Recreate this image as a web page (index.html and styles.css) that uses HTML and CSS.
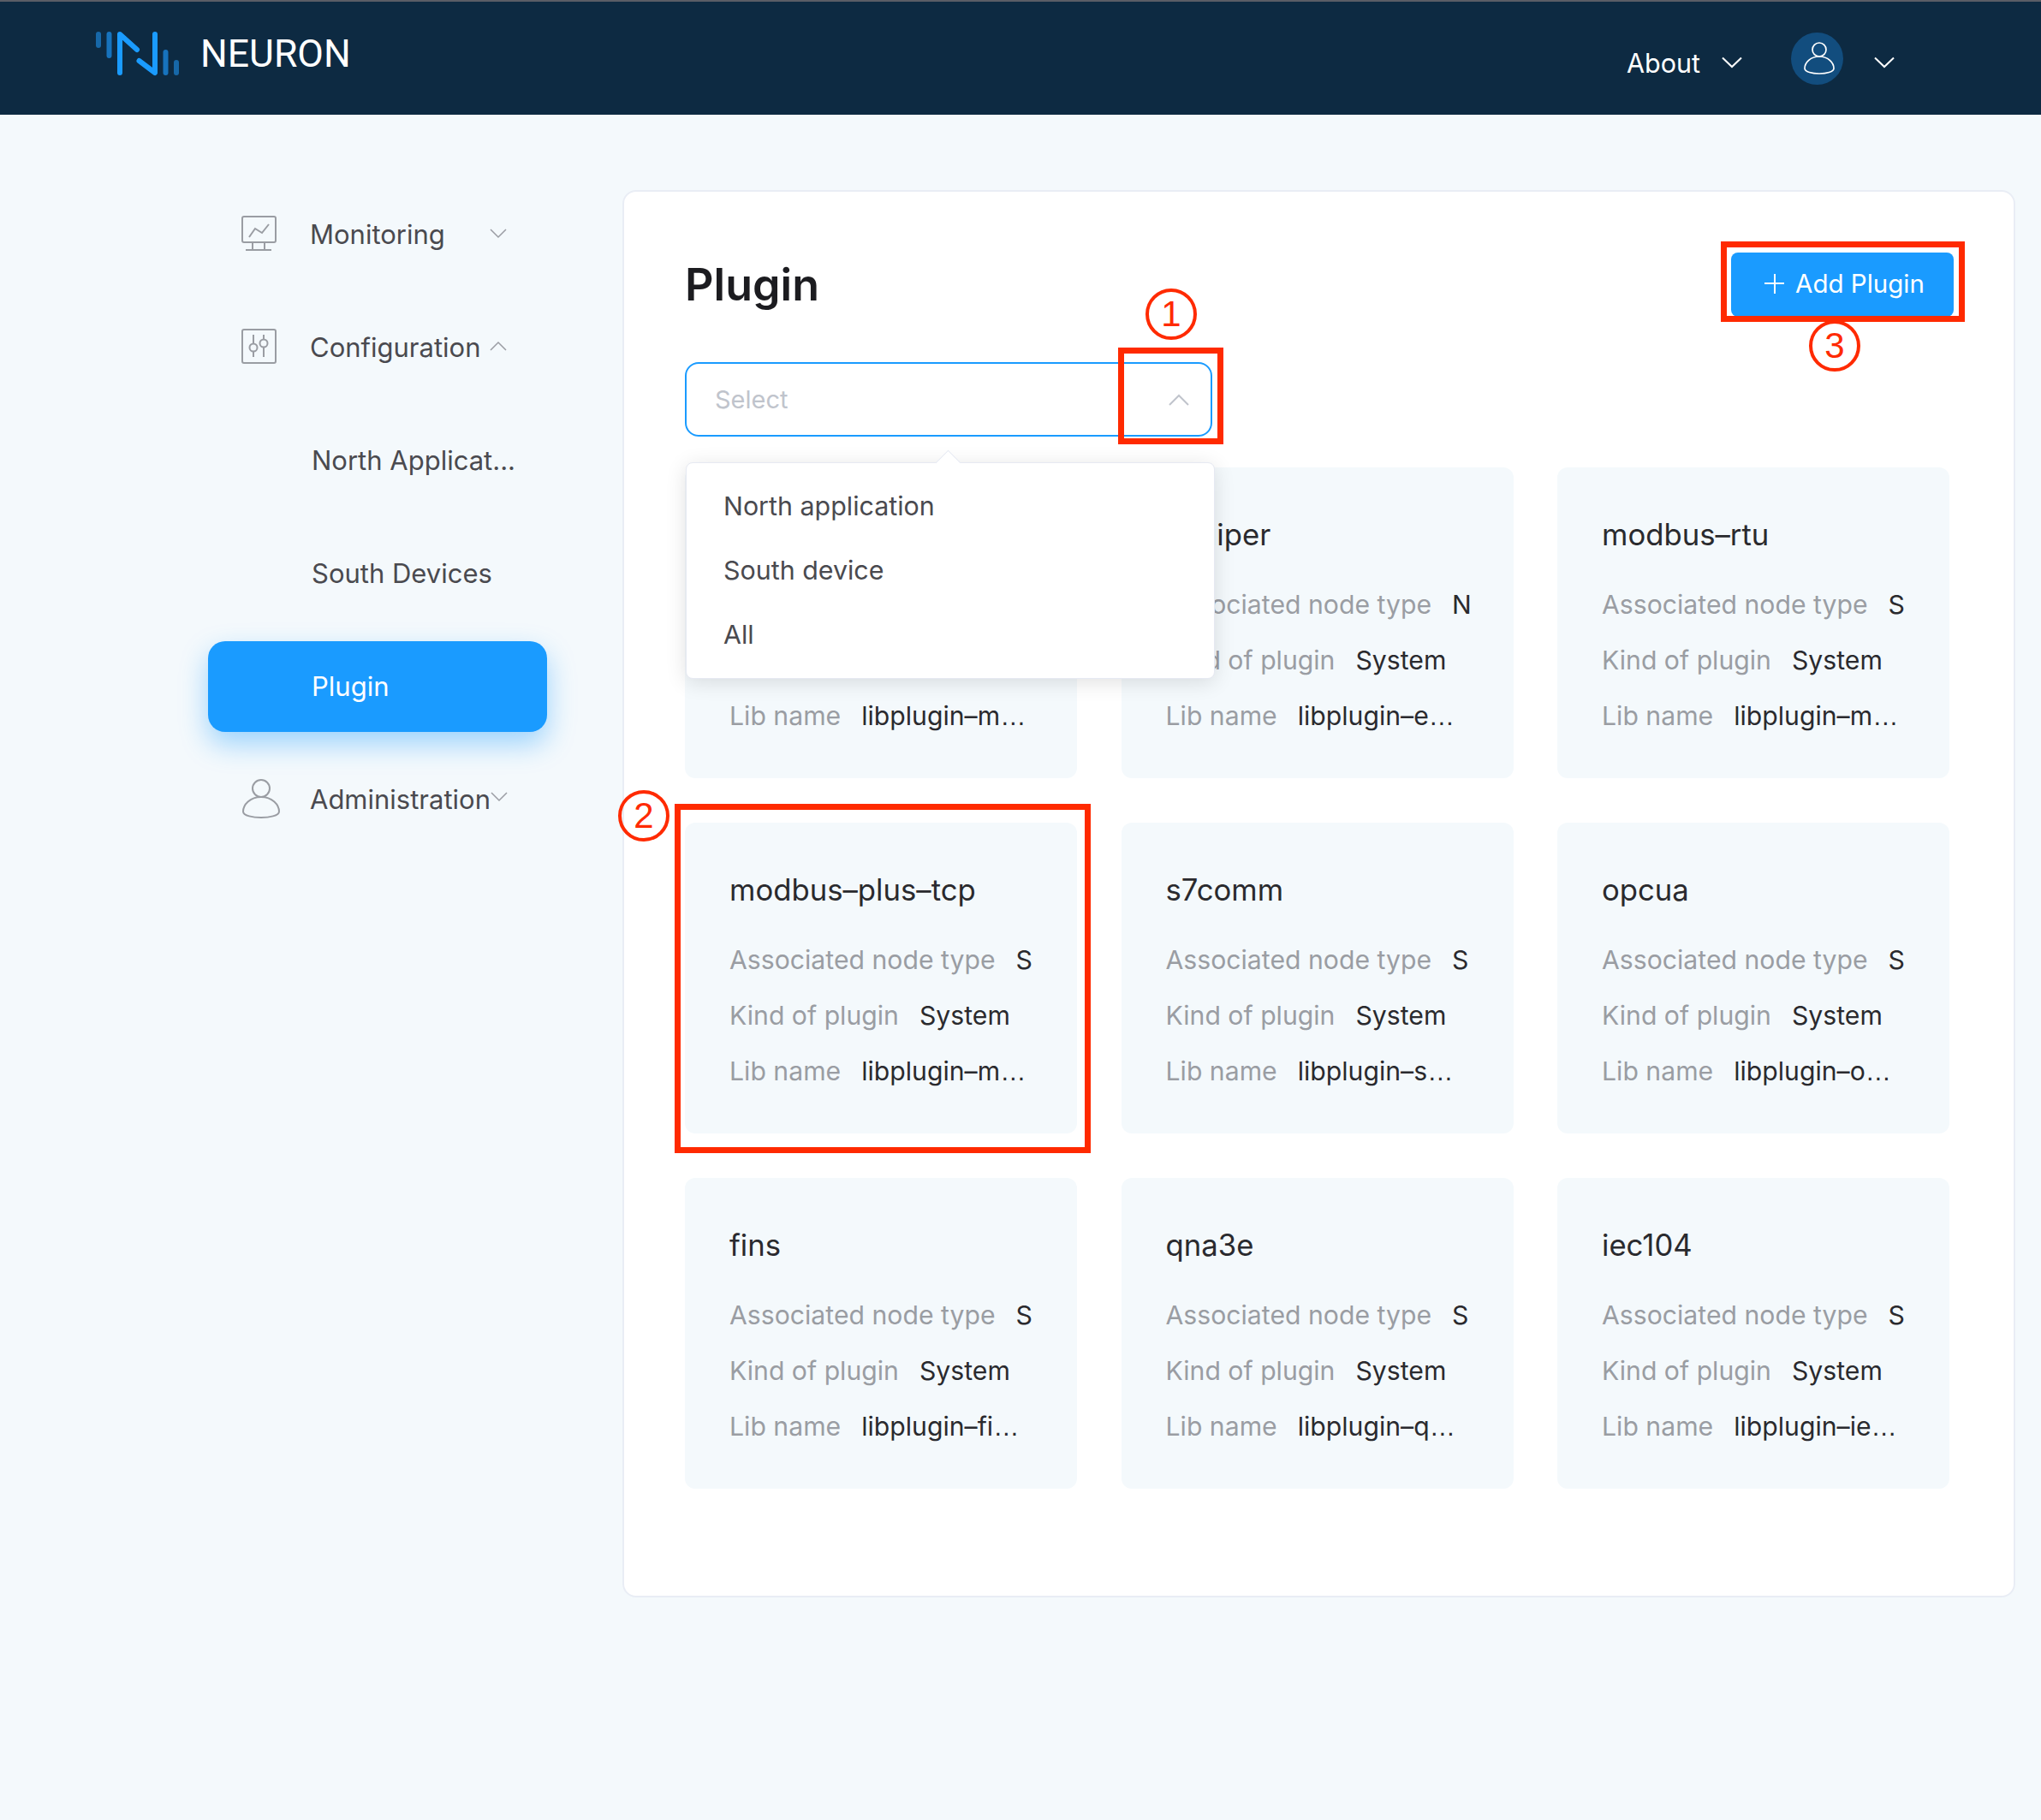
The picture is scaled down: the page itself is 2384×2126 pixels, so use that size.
FILE: index.html
```html
<!DOCTYPE html>
<html lang="en">
<head>
  <meta charset="UTF-8">
  <title>Neuron - Plugin</title>
  <link rel="stylesheet" href="styles.css">
</head>
<body>
  <header class="topbar">
    <div class="brand">
      <svg class="logo" width="100" height="55" viewBox="0 0 100 55" fill="none" stroke-linecap="round" stroke-linejoin="round" stroke-width="6">
        <path d="M5 5V18" stroke="#1768a8"/>
        <path d="M17.500 5V30" stroke="#1773bd"/>
        <path d="M30 50V5L50 23" stroke="#1a9bff"/>
        <path d="M52.500 36L71 50V5" stroke="#1a9bff"/>
        <path d="M83.500 26V50" stroke="#1773bd"/>
        <path d="M96 38V50" stroke="#1768a8"/>
      </svg>
      <span class="brand-name">NEURON</span>
    </div>
    <div class="topbar-right">
      <span class="about">About</span>
      <svg class="chev-top" width="24" height="14" viewBox="0 0 24 14" fill="none" stroke="#fff" stroke-width="2"><path d="M1 1.500L12 12L23 1.500"/></svg>
      <span class="avatar">
        <svg width="38" height="38" viewBox="0 0 38 38" fill="none" stroke="#fff" stroke-width="1.700"><circle cx="19" cy="9" r="8"/><path d="M19 17C9 17 2 24 2 31C2 35 11 37 19 37C27 37 36 35 36 31C36 24 29 17 19 17Z"/></svg>
      </span>
      <svg class="chev-top" width="24" height="14" viewBox="0 0 24 14" fill="none" stroke="#fff" stroke-width="2"><path d="M1 1.500L12 12L23 1.500"/></svg>
    </div>
  </header>

  <div class="layout">
    <nav class="sidebar">
      <div class="nav-item">
        <svg class="nav-icon" width="42" height="42" viewBox="0 0 42 42" fill="none" stroke="#9a9da3" stroke-width="2"><rect x="1" y="1" width="39" height="30" rx="2"/><path d="M9 25L16 15L24 20L32 10"/><path d="M13 31V40M27 31V40M5 40H35"/></svg>
        <span class="nav-label">Monitoring</span>
        <svg class="nav-chev" width="20" height="12" viewBox="0 0 20 12" fill="none" stroke="#9a9da3" stroke-width="1.500"><path d="M1 1L10 10L19 1"/></svg>
      </div>
      <div class="nav-item">
        <svg class="nav-icon" width="42" height="42" viewBox="0 0 42 42" fill="none" stroke="#9a9da3" stroke-width="2"><rect x="1" y="1" width="39" height="39" rx="2"/><path d="M14 7V17.500M14 26.500V33M26 7V12.500M26 21.500V33"/><circle cx="14" cy="22" r="4.500"/><circle cx="26" cy="17" r="4.500"/></svg>
        <span class="nav-label">Configuration</span>
        <svg class="nav-chev up" width="20" height="12" viewBox="0 0 20 12" fill="none" stroke="#9a9da3" stroke-width="1.500"><path d="M1 11L10 2L19 11"/></svg>
      </div>
      <div class="nav-item sub">North Applicat...</div>
      <div class="nav-item sub">South Devices</div>
      <div class="nav-item sub active">Plugin</div>
      <div class="nav-item admin">
        <svg class="nav-icon" width="46" height="46" viewBox="0 0 46 46" fill="none" stroke="#9a9da3" stroke-width="2"><circle cx="23" cy="11" r="10"/><path d="M23 21C10 21 2 30 2 38C2 43 14 45 23 45C32 45 44 43 44 38C44 30 36 21 23 21Z"/></svg>
        <span class="nav-label">Administration</span>
        <svg class="nav-chev" width="20" height="12" viewBox="0 0 20 12" fill="none" stroke="#9a9da3" stroke-width="1.500"><path d="M1 1L10 10L19 1"/></svg>
      </div>
    </nav>

    <main class="panel">
      <div class="panel-head">
        <h1>Plugin</h1>
        <button class="add-btn"><span class="plus"></span>Add Plugin</button>
      </div>
      <div class="select">
        <span>Select</span>
        <svg width="24" height="14" viewBox="0 0 24 14" fill="none" stroke="#c0c4cc" stroke-width="2"><path d="M1 13L12 2L23 13"/></svg>
      </div>

      <div class="dropdown">
        <div class="dropdown-item">North application</div>
        <div class="dropdown-item">South device</div>
        <div class="dropdown-item">All</div>
      </div>

      <div class="grid">
        <article class="plugin-card">
          <div class="plugin-name">mqtt</div>
          <div class="row"><span class="key">Associated node type</span><span class="val">N</span></div>
          <div class="row"><span class="key">Kind of plugin</span><span class="val">System</span></div>
          <div class="row"><span class="key">Lib name</span><span class="val">libplugin–m<span class="dots">…</span></span></div>
        </article>
        <article class="plugin-card">
          <div class="plugin-name">ekuiper</div>
          <div class="row"><span class="key">Associated node type</span><span class="val">N</span></div>
          <div class="row"><span class="key">Kind of plugin</span><span class="val">System</span></div>
          <div class="row"><span class="key">Lib name</span><span class="val">libplugin–e<span class="dots">…</span></span></div>
        </article>
        <article class="plugin-card">
          <div class="plugin-name">modbus–rtu</div>
          <div class="row"><span class="key">Associated node type</span><span class="val">S</span></div>
          <div class="row"><span class="key">Kind of plugin</span><span class="val">System</span></div>
          <div class="row"><span class="key">Lib name</span><span class="val">libplugin–m<span class="dots">…</span></span></div>
        </article>
        <article class="plugin-card">
          <div class="plugin-name">modbus–plus–tcp</div>
          <div class="row"><span class="key">Associated node type</span><span class="val">S</span></div>
          <div class="row"><span class="key">Kind of plugin</span><span class="val">System</span></div>
          <div class="row"><span class="key">Lib name</span><span class="val">libplugin–m<span class="dots">…</span></span></div>
        </article>
        <article class="plugin-card">
          <div class="plugin-name">s7comm</div>
          <div class="row"><span class="key">Associated node type</span><span class="val">S</span></div>
          <div class="row"><span class="key">Kind of plugin</span><span class="val">System</span></div>
          <div class="row"><span class="key">Lib name</span><span class="val">libplugin–s<span class="dots">…</span></span></div>
        </article>
        <article class="plugin-card">
          <div class="plugin-name">opcua</div>
          <div class="row"><span class="key">Associated node type</span><span class="val">S</span></div>
          <div class="row"><span class="key">Kind of plugin</span><span class="val">System</span></div>
          <div class="row"><span class="key">Lib name</span><span class="val">libplugin–o<span class="dots">…</span></span></div>
        </article>
        <article class="plugin-card">
          <div class="plugin-name">fins</div>
          <div class="row"><span class="key">Associated node type</span><span class="val">S</span></div>
          <div class="row"><span class="key">Kind of plugin</span><span class="val">System</span></div>
          <div class="row"><span class="key">Lib name</span><span class="val">libplugin–fi<span class="dots">…</span></span></div>
        </article>
        <article class="plugin-card">
          <div class="plugin-name">qna3e</div>
          <div class="row"><span class="key">Associated node type</span><span class="val">S</span></div>
          <div class="row"><span class="key">Kind of plugin</span><span class="val">System</span></div>
          <div class="row"><span class="key">Lib name</span><span class="val">libplugin–q<span class="dots">…</span></span></div>
        </article>
        <article class="plugin-card">
          <div class="plugin-name">iec104</div>
          <div class="row"><span class="key">Associated node type</span><span class="val">S</span></div>
          <div class="row"><span class="key">Kind of plugin</span><span class="val">System</span></div>
          <div class="row"><span class="key">Lib name</span><span class="val">libplugin–ie<span class="dots">…</span></span></div>
        </article>
      </div>
    </main>
  </div>

  <!-- red callouts drawn over the screenshot -->
  <div class="mark mark-select"></div>
  <div class="mark mark-card"></div>
  <div class="mark mark-add"></div>
  <div class="badge badge-1">1</div>
  <div class="badge badge-2">2</div>
  <div class="badge badge-3">3</div>
</body>
</html>
```

FILE: styles.css
```css
* {
  box-sizing: border-box;
}
html, body {
  margin: 0;
  padding: 0;
}
body {
  position: relative;
  min-height: 2126px;
  overflow: hidden;
  background-color: #f4f9fc;
  font-family: 'Inter', 'Roboto', sans-serif;
  font-size: 30px;
  color: #4a4a4f;
}

/* top bar */
.topbar {
  height: 134px;
  border-top: 2px solid #5a5d66;
  background-color: #0d2a42;
  color: #fff;
  display: flex;
  justify-content: space-between;
}
.brand {
  display: flex;
  align-items: flex-start;
  padding: 33px 0 0 110px;
}
.brand-name {
  margin: 2px 0 0 24px;
  font-family: 'Roboto', sans-serif;
  font-size: 44.5px;
  line-height: 52px;
}
.topbar-right {
  display: flex;
  align-items: center;
  padding: 10px 171px 0 0;
}
.about {
  font-size: 30.5px;
}
.chev-top {
  margin-left: 25px;
}
.avatar {
  width: 61px;
  height: 61px;
  margin: -10px 11px 0 57px;
  border-radius: 50%;
  background-color: #124d7e;
  display: flex;
  align-items: center;
  justify-content: center;
  padding: 0 0 0 4px;
}

.layout {
  display: flex;
  align-items: flex-start;
}

/* sidebar */
.sidebar {
  width: 396px;
  margin: 87px 0 0 243px;
  display: flex;
  flex-direction: column;
  gap: 26px;
  flex-shrink: 0;
  font-size: 31px;
}
.nav-item {
  height: 106px;
  display: flex;
  align-items: center;
  padding: 0 0 2px 39px;
  border-radius: 20px;
  white-space: nowrap;
}
.nav-icon {
  flex-shrink: 0;
  margin-right: 38px;
}
.admin .nav-icon {
  margin-right: 34px;
}
.nav-chev {
  flex-shrink: 0;
  margin: 0 47px 0 auto;
}
.nav-chev.up {
  margin-top: -3px;
}
.admin .nav-chev {
  margin-top: -4px;
}
.nav-item.sub {
  padding-left: 121px;
}
.nav-item.active {
  background-color: #1a9bff;
  color: #fff;
  box-shadow: 0 14px 32px rgba(26, 155, 255, 0.4);
}

/* main panel */
.panel {
  position: relative;
  width: 1627px;
  height: 1644px;
  margin: 88px 0 0 88px;
  padding: 0 76px 0 71px;
  background-color: #fff;
  border: 2px solid #e9edf5;
  border-radius: 16px;
}
.panel-head {
  display: flex;
  justify-content: space-between;
  padding-top: 71px;
  height: 199px;
}
h1 {
  margin: 0;
  font-size: 52px;
  line-height: 76px;
  font-weight: 600;
  color: #1c1c20;
}
.add-btn {
  width: 260px;
  height: 75px;
  margin-right: -6px;
  padding: 0 0 3px 5px;
  border: none;
  border-radius: 8px;
  background-color: #1a9bff;
  color: #fff;
  font-family: inherit;
  font-size: 29.5px;
  display: flex;
  align-items: center;
  justify-content: center;
}
.plus {
  width: 23px;
  height: 23px;
  margin-right: 13px;
  background:
    linear-gradient(#fff, #fff) center / 100% 2px no-repeat,
    linear-gradient(#fff, #fff) center / 2px 100% no-repeat;
}
.select {
  width: 616px;
  height: 87px;
  padding: 0 25px 0 33px;
  border: 2px solid #1a9bff;
  border-radius: 16px;
  font-size: 29px;
  color: #c0c4cc;
  display: flex;
  align-items: center;
  justify-content: space-between;
}

.dropdown {
  position: absolute;
  left: 72px;
  top: 316px;
  z-index: 2;
  width: 618px;
  height: 253px;
  padding: 13px 0;
  background-color: #fff;
  border: 1px solid #e6e9f2;
  border-radius: 8px;
  box-shadow: 0 4px 24px rgba(0, 0, 0, 0.12);
}
.dropdown::before {
  content: "";
  position: absolute;
  left: 295px;
  top: -11px;
  width: 20px;
  height: 20px;
  background-color: #fff;
  border-left: 1px solid #e6e9f2;
  border-top: 1px solid #e6e9f2;
  transform: rotate(45deg);
}
.dropdown-item {
  height: 75px;
  line-height: 75px;
  padding-left: 43px;
  font-size: 30.4px;
}

/* plugin cards */
.grid {
  display: grid;
  grid-template-columns: repeat(3, 458px);
  grid-auto-rows: 363px;
  gap: 52px 51.500px;
  margin-top: 36px;
}
.plugin-card {
  padding: 52px 0 0 52px;
  background-color: #f4f9fc;
  border-radius: 12px;
  white-space: nowrap;
}
.plugin-name {
  height: 52px;
  margin-bottom: 24px;
  font-size: 34.700px;
  line-height: 52px;
  color: #2a2a2e;
}
.row {
  height: 65px;
  line-height: 65px;
  display: flex;
  gap: 24px;
  font-size: 30.200px;
}
.key {
  color: #9a9da3;
}
.val {
  color: #2a2a2e;
}
.dots {
  font-family: 'Liberation Sans', sans-serif;
}

/* annotations */
.mark {
  position: absolute;
  border: 7px solid #ff2a00;
  z-index: 5;
}
.mark-select {
  left: 1306px;
  top: 406px;
  width: 123px;
  height: 113px;
}
.mark-card {
  left: 788px;
  top: 939px;
  width: 486px;
  height: 408px;
}
.mark-add {
  left: 2010px;
  top: 282px;
  width: 285px;
  height: 94px;
}
.badge {
  position: absolute;
  z-index: 5;
  width: 60px;
  height: 60px;
  border: 4px solid #ff2a00;
  border-radius: 50%;
  color: #ff2a00;
  font-family: 'Liberation Sans', sans-serif;
  font-size: 42px;
  line-height: 52px;
  text-align: center;
}
.badge-1 {
  left: 1338px;
  top: 337px;
}
.badge-2 {
  left: 722px;
  top: 923px;
}
.badge-3 {
  left: 2113px;
  top: 374px;
}
```
